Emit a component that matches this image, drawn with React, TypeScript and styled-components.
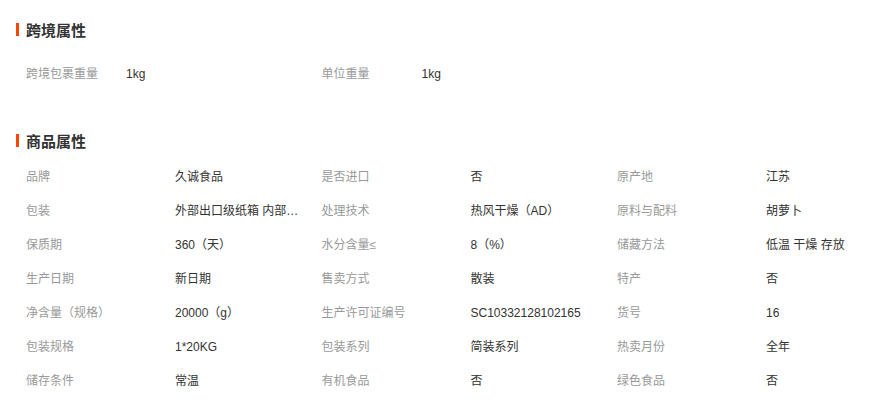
import styled, { createGlobalStyle } from "styled-components";

const GlobalStyle = createGlobalStyle`
  body {
    margin: 0;
    background: #fff;
    font-family: "Liberation Sans", "Noto Sans CJK SC", sans-serif;
    font-size: 12px;
    color: #333;
  }
`;

const Page = styled.div`
  padding: 19px 16px 0;
`;

const Section = styled.section<{ $gap: number }>`
  margin-bottom: ${(p) => p.$gap}px;
`;

const Title = styled.h3`
  display: flex;
  align-items: center;
  gap: 7px;
  margin: 0;
  height: 20px;
  font-size: 15px;
  font-weight: bold;
  color: #333;
`;

const Bar = styled.span`
  width: 3px;
  height: 13px;
  background: #ff4400;
`;

const AttrList = styled.ul<{ $top: number }>`
  display: grid;
  grid-template-columns: repeat(3, 295.5px);
  margin: ${(p) => p.$top}px 0 0;
  padding: 0 0 0 10px;
  list-style: none;
`;

const Attr = styled.li`
  display: flex;
  align-items: center;
  height: 34px;
  line-height: 34px;
`;

const Label = styled.span<{ $w: number }>`
  width: ${(p) => p.$w}px;
  flex-shrink: 0;
  color: #999;
  white-space: nowrap;
`;

const Value = styled.span`
  max-width: 124px;
  overflow: hidden;
  white-space: nowrap;
  text-overflow: ellipsis;
  color: #333;
`;

const crossBorder = [
  ["跨境包裹重量", "1kg"],
  ["单位重量", "1kg"],
];

const product = [
  ["品牌", "久诚食品"],
  ["是否进口", "否"],
  ["原产地", "江苏"],
  ["包装", "外部出口级纸箱 内部真空包装"],
  ["处理技术", "热风干燥（AD）"],
  ["原料与配料", "胡萝卜"],
  ["保质期", "360（天）"],
  ["水分含量≤", "8（%）"],
  ["储藏方法", "低温 干燥 存放"],
  ["生产日期", "新日期"],
  ["售卖方式", "散装"],
  ["特产", "否"],
  ["净含量（规格）", "20000（g）"],
  ["生产许可证编号", "SC10332128102165"],
  ["货号", "16"],
  ["包装规格", "1*20KG"],
  ["包装系列", "简装系列"],
  ["热卖月份", "全年"],
  ["储存条件", "常温"],
  ["有机食品", "否"],
  ["绿色食品", "否"],
];

function App() {
  return (
    <Page>
      <GlobalStyle />
      <Section $gap={39}>
        <Title>
          <Bar />
          跨境属性
        </Title>
        <AttrList $top={18}>
          {crossBorder.map(([k, v]) => (
            <Attr key={k}>
              <Label $w={100}>{k}</Label>
              <Value>{v}</Value>
            </Attr>
          ))}
        </AttrList>
      </Section>
      <Section $gap={0}>
        <Title>
          <Bar />
          商品属性
        </Title>
        <AttrList $top={10}>
          {product.map(([k, v]) => (
            <Attr key={k}>
              <Label $w={149}>{k}</Label>
              <Value>{v}</Value>
            </Attr>
          ))}
        </AttrList>
      </Section>
    </Page>
  );
}

export default App;
